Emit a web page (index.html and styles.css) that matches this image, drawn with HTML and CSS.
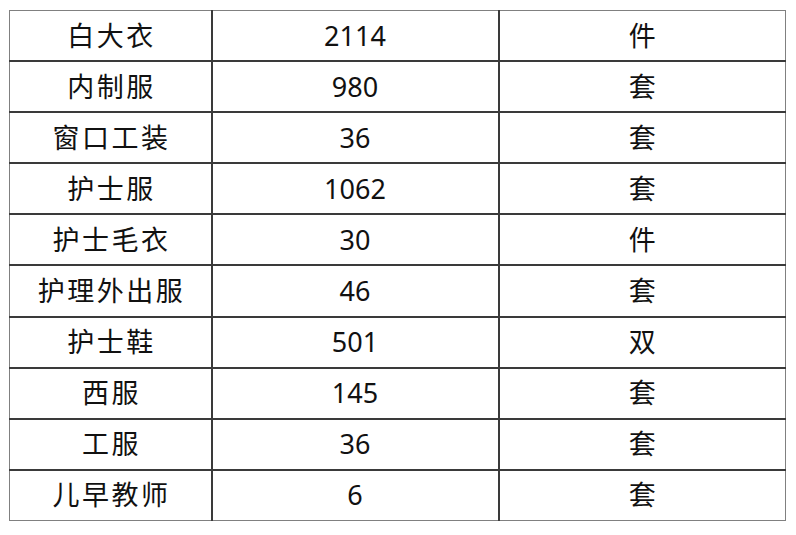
FILE: index.html
```html
<!DOCTYPE html>
<html lang="zh">
<head>
<meta charset="utf-8">
<link rel="stylesheet" href="styles.css">
</head>
<body>
<table class="sheet">
  <colgroup><col class="c1"><col class="c2"><col class="c3"></colgroup>
  <tbody>
    <tr><td class="name">白大衣</td><td class="num">2114</td><td class="unit">件</td></tr>
    <tr><td class="name">内制服</td><td class="num">980</td><td class="unit">套</td></tr>
    <tr><td class="name">窗口工装</td><td class="num">36</td><td class="unit">套</td></tr>
    <tr><td class="name">护士服</td><td class="num">1062</td><td class="unit">套</td></tr>
    <tr><td class="name">护士毛衣</td><td class="num">30</td><td class="unit">件</td></tr>
    <tr><td class="name">护理外出服</td><td class="num">46</td><td class="unit">套</td></tr>
    <tr><td class="name">护士鞋</td><td class="num">501</td><td class="unit">双</td></tr>
    <tr><td class="name">西服</td><td class="num">145</td><td class="unit">套</td></tr>
    <tr><td class="name">工服</td><td class="num">36</td><td class="unit">套</td></tr>
    <tr><td class="name">儿早教师</td><td class="num">6</td><td class="unit">套</td></tr>
  </tbody>
</table>
</body>
</html>
```
FILE: styles.css
```css
html, body {
  margin: 0;
  background: #ffffff;
}
body {
  padding: 10px 0 0 9px;
  font-family: "Noto Sans", "Noto Sans CJK SC", sans-serif;
  color: #111;
}
.sheet {
  border-collapse: collapse;
  table-layout: fixed;
  width: 776px;
  border: 1.5px solid #808080;
}
.c1 { width: 202px; }
.c2 { width: 287px; }
.c3 { width: 287px; }
.sheet td {
  height: 49.1px;
  padding: 0;
  text-align: center;
  vertical-align: middle;
  font-size: 27px;
  line-height: 30px;
  border: 2px solid #3a3a3a;
}
.sheet tr:first-child td { border-top: 1.5px solid #808080; }
.sheet tr:last-child td { border-bottom: 1.5px solid #808080; }
.sheet td:first-child { border-left: 1.5px solid #808080; }
.sheet td:last-child { border-right: 1.5px solid #808080; }
.name { letter-spacing: 2.5px; text-indent: 2.5px; }
.num { font-size: 28px; }
```
